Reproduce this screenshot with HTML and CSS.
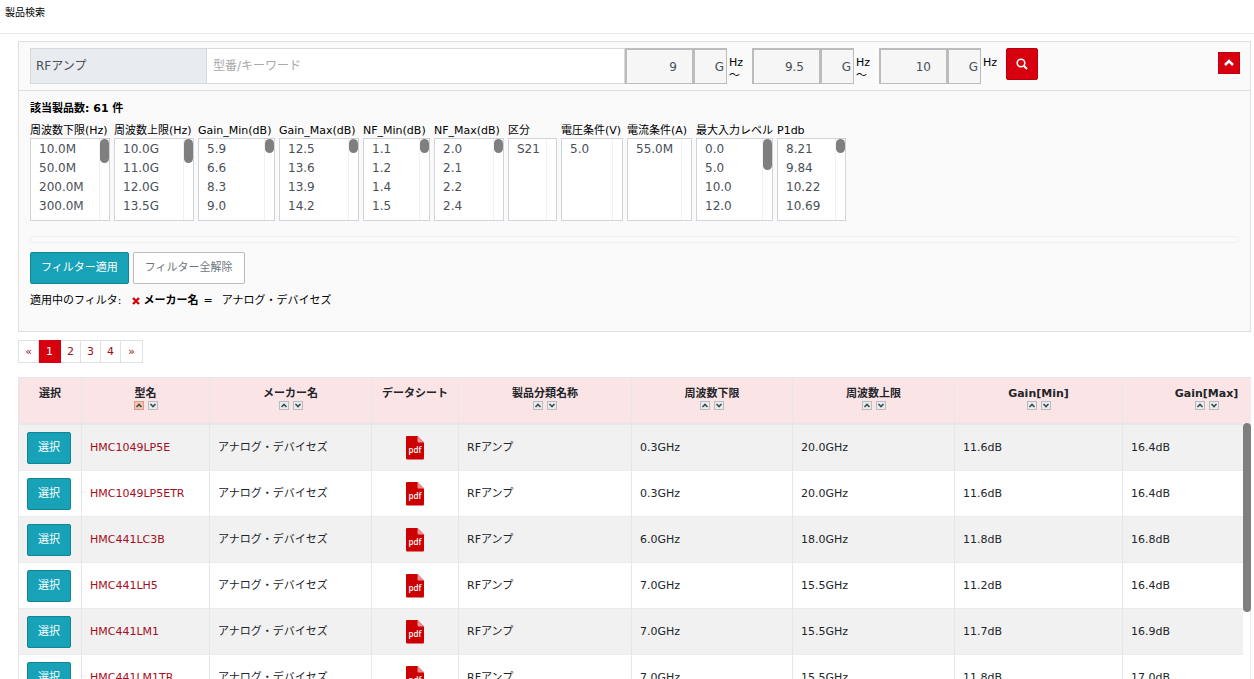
FILE: index.html
```html
<!DOCTYPE html>
<html lang="ja">
<head>
<meta charset="utf-8">
<meta name="viewport" content="width=device-width, initial-scale=1">
<title>製品検索</title>
<link rel="stylesheet" href="styles.css">
</head>
<body>
<header class="title-bar"><h1>製品検索</h1></header>
<main class="page">
  <section class="panel">
    <form class="search">
      <select class="category" aria-label="製品分類"><option>RFアンプ</option></select>
      <input class="keyword" type="text" placeholder="型番/キーワード" aria-label="型番/キーワード">
      <input class="num" type="text" value="9" aria-label="周波数下限"><input class="unit" type="text" value="G" aria-label="下限単位"><span class="hz">Hz<br>～</span>
      <input class="num" type="text" value="9.5" aria-label="周波数"><input class="unit" type="text" value="G" aria-label="単位"><span class="hz">Hz<br>～</span>
      <input class="num" type="text" value="10" aria-label="周波数上限"><input class="unit" type="text" value="G" aria-label="上限単位"><span class="hz">Hz</span>
      <button class="go" type="button" aria-label="検索"><svg width="12" height="12" viewBox="0 0 12 12"><circle cx="5" cy="5" r="3.800" fill="none" stroke="#fff" stroke-width="1.600"/><path d="M7.800 7.800 11 11" stroke="#fff" stroke-width="2"/></svg></button>
      <button class="fold" type="button" aria-label="折りたたむ"><svg width="10" height="8" viewBox="0 0 10 8"><path d="M1 6 5 2 9 6" fill="none" stroke="#fff" stroke-width="2.500"/></svg></button>
    </form>
    <div class="panel-body">
      <p class="count">該当製品数: 61 件</p>
      <div class="filters" id="filters"></div>
      <div class="track"></div>
      <div class="actions"><button class="teal" type="button">フィルター適用</button><button class="plain" type="button">フィルター全解除</button></div>
      <p class="active-filter">適用中のフィルタ: <button class="remove" type="button" aria-label="解除"><svg width="8" height="8" viewBox="0 0 8 8"><path d="M1 1 7 7M7 1 1 7" stroke="#d7000f" stroke-width="2.400"/></svg></button><b>メーカー名</b><span class="eq">=</span>アナログ・デバイセズ</p>
    </div>
  </section>
  <nav class="pages" aria-label="ページ"><a href="#">«</a><a href="#" class="current">1</a><a href="#">2</a><a href="#">3</a><a href="#">4</a><a href="#">»</a></nav>
  <div class="results">
    <table>
      <colgroup><col class="c-pick"><col class="c-model"><col class="c-maker"><col class="c-sheet"><col class="c-kind"><col class="c-low"><col class="c-high"><col class="c-gain"><col class="c-gain"></colgroup>
      <thead><tr id="head"></tr></thead>
      <tbody id="rows"></tbody>
    </table>
    <div class="scrollbar"><div class="scroll-thumb"></div></div>
  </div>
</main>
<script src="app.js"></script>
</body>
</html>
```
FILE: styles.css
```css
* { box-sizing: border-box; }
body {
  margin: 0;
  height: 100vh;
  overflow: hidden;
  display: flex;
  flex-direction: column;
  background: #fff;
  color: #212529;
  font: 11px/16px "DejaVu Sans", "Noto Sans CJK JP", sans-serif;
}
button, input, select { font: inherit; color: inherit; margin: 0; }
button { cursor: pointer; }
a { color: #a50d22; text-decoration: none; }
p { margin: 0; }
.title-bar { height: 34px; padding: 5px; border-bottom: 1px solid #e7e7e7; flex: none; }
.title-bar h1 { margin: 0; font-size: 10px; font-weight: 400; line-height: 16px; color: #000; }
.page { flex: 1; min-height: 0; display: flex; flex-direction: column; padding: 7px 3px 0 18px; }

.panel { flex: none; border: 1px solid #dfdfdf; background: #fafafa; }
.search { display: flex; align-items: flex-start; padding: 6px 10px 6px 11px; border-bottom: 1px solid #dfdfdf; }
.category, .keyword { height: 36px; border: 1px solid #d5d9dd; font-size: 12px; color: #495057; border-radius: 0; outline: 0; }
.category { appearance: none; width: 177px; padding: 0 5px; background: #e9ecef; }
.keyword { flex: 1; min-width: 0; padding: 0 6px; background: #fff; border-left: 0; }
.keyword::placeholder { color: #a9a9a9; }
.num, .unit { height: 36px; border: solid #bcbcbc; border-width: 2px 1px 1px 2px; background: #f6f6f6; font-size: 12px; color: #495057; text-align: right; border-radius: 0; }
.num { width: 68px; padding: 0 15px 0 0; }
.unit { width: 34px; padding: 0 2px 0 0; }
.hz { width: 25px; padding: 8px 0 0 2px; line-height: 13px; color: #000; }
.go { width: 32px; height: 32px; padding: 0; border: 1px solid #b8000d; border-radius: 2px; background: #d7000f; display: grid; place-items: center; }
.fold { width: 22px; height: 22px; margin: 4px 0 0 180px; padding: 0; border: 1px solid #c0000d; background: #d7000f; display: grid; place-items: center; }

.panel-body { padding: 10px 11px 22px; color: #000; }
.count { font-weight: 700; }
.filters { display: grid; grid-template-columns: 80px 80px 77px 80px 67px 70px 49px 62px 65px 77px 69px; gap: 4px; margin-top: 7px; }
.filter label { display: block; white-space: nowrap; line-height: 14px; }
.list { position: relative; }
.list select { display: block; width: 100%; height: 83px; padding: 3px 0; border: 1px solid #ced4da; border-radius: 0; background: #fff; color: #495057; font-size: 12px; overflow: hidden; outline: 0; }
.list option { padding: 0 8px; line-height: 19px; min-height: 19px; }
.list::after { content: ""; position: absolute; top: 1px; right: 1px; bottom: 1px; width: 9px; border-left: 1px solid #f1f1f1; }
.thumb { position: absolute; z-index: 1; top: 1px; right: 1px; width: 9px; height: 14px; border-radius: 5px; background: #7f7f7f; }
.thumb-mid { height: 24px; }
.thumb-long { height: 31px; }
.track { height: 7px; margin-top: 15px; border: 1px solid #f0f0f0; border-radius: 4px; }
.actions { display: flex; gap: 4px; margin: 9px 0; }
.teal, .plain { height: 32px; padding: 0 11px; border: 1px solid #138496; border-radius: 2px; background: #17a2b8; color: #fff; }
.plain { background: #fff; border-color: #bbb; color: #6c757d; }
.teal { padding: 0 10px; }
.active-filter { display: flex; align-items: center; }
.remove { padding: 0; margin: 0 4px 0 10px; border: 0; background: none; display: flex; }
.eq { margin: 0 9px 0 5px; }

.pages { flex: none; display: flex; margin: 8px 0 14px; line-height: 21px; }
.pages a { min-width: 20px; padding: 0 6px; text-align: center; border: 1px solid #dee2e6; border-left: 0; }
.pages a:first-child { border-left: 1px solid #dee2e6; width: 21px; }
.pages .current { width: 22px; background: #d7000f; color: #fff; border-color: #d7000f; }
.pages a:last-child { width: 22px; }

.results { position: relative; flex: 1; min-height: 0; overflow: hidden; }
table { width: 1273px; table-layout: fixed; border-collapse: separate; border-spacing: 0; border-left: 1px solid #e4e7ea; }
.c-pick { width: 63px; } .c-model { width: 128px; } .c-maker { width: 162px; } .c-sheet { width: 87px; } .c-kind { width: 173px; }
.c-low { width: 161px; } .c-high { width: 162px; } .c-gain { width: 168px; }
th { height: 48px; padding: 8px 0 0; vertical-align: top; background: #fbe4e6; border: solid #e9e6ea; border-width: 1px 1px 2px 0; line-height: 15px; }
td { height: 46px; padding: 0 8px; border-right: 1px solid #e4e7ea; border-bottom: 1px solid #e9ebed; }
tbody tr:nth-child(odd) { background: #f1f1f1; }
.sort { display: flex; justify-content: center; gap: 4px; }
.sort button { width: 10px; height: 9px; padding: 0; border: 1px solid #b9bdc2; background: #e9eced; color: #3d4a50; display: grid; }
.sort svg { width: 8px; height: 7px; }
.sort .on { border-color: #d99b86; background: #f6c5b2; }
.pick { display: block; width: 44px; height: 32px; padding: 0; border: 1px solid #138496; border-radius: 2px; background: #17a2b8; color: #fff; }
.sheet a { display: block; width: 18px; height: 24px; margin: 0 auto; }
.sheet svg { display: block; width: 18px; height: 24px; }
.pdf-text { font: 600 8px "Open Sans", sans-serif; fill: #fff; }
.scrollbar { position: absolute; top: 46px; right: 0; bottom: 0; width: 8px; background: #fff; border-right: 1px solid #eee; }
.scroll-thumb { width: 8px; height: 189px; border-radius: 4px; background: #7f7f7f; }
```
FILE: app.js
```javascript
const filters = [
  ["周波数下限(Hz)", ["10.0M", "50.0M", "200.0M", "300.0M"], "mid"],
  ["周波数上限(Hz)", ["10.0G", "11.0G", "12.0G", "13.5G"], "mid"],
  ["Gain_Min(dB)", ["5.9", "6.6", "8.3", "9.0"], "short"],
  ["Gain_Max(dB)", ["12.5", "13.6", "13.9", "14.2"], "short"],
  ["NF_Min(dB)", ["1.1", "1.2", "1.4", "1.5"], "short"],
  ["NF_Max(dB)", ["2.0", "2.1", "2.2", "2.4"], "short"],
  ["区分", ["S21"]],
  ["電圧条件(V)", ["5.0"]],
  ["電流条件(A)", ["55.0M"]],
  ["最大入力レベル", ["0.0", "5.0", "10.0", "12.0"], "long"],
  ["P1db", ["8.21", "9.84", "10.22", "10.69"], "short"]
];
document.getElementById("filters").innerHTML = filters.map(([name, values, thumb], i) =>
  `<div class="filter"><label for="f${i}">${name}</label><div class="list"><select id="f${i}" multiple size="4">${values.map(v => `<option>${v}</option>`).join("")}</select>${thumb ? `<span class="thumb thumb-${thumb}"></span>` : ""}</div></div>`
).join("");

const chevron = d => `<svg viewBox="0 0 8 7"><path d="${d}" fill="none" stroke="currentColor" stroke-width="1.600"/></svg>`;
const sort = active => `<div class="sort"><button type="button" class="${active ? "on" : ""}" aria-label="昇順">${chevron("M1.500 5 4 2.500 6.500 5")}</button><button type="button" aria-label="降順">${chevron("M1.500 2 4 4.500 6.500 2")}</button></div>`;
const heads = ["選択", "型名", "メーカー名", "データシート", "製品分類名称", "周波数下限", "周波数上限", "Gain[Min]", "Gain[Max]"];
document.getElementById("head").innerHTML = heads.map((h, i) =>
  `<th scope="col">${h}${i === 0 || i === 3 ? "" : sort(i === 1)}</th>`
).join("");

const pdf = `<svg viewBox="0 0 18 24"><path d="M0 1Q0 0 1 0H11.500L18 6.500V22Q18 23.500 17 23.500H1Q0 23.500 0 22Z" fill="#c00"/><path d="M11.500 0 18 6.500H12.500Q11.500 6.500 11.500 5.500Z" fill="#ec8f92"/><text x="9" y="17" text-anchor="middle" class="pdf-text">pdf</text></svg>`;
const rows = [
  ["HMC1049LP5E", "0.3GHz", "20.0GHz", "11.6dB", "16.4dB"],
  ["HMC1049LP5ETR", "0.3GHz", "20.0GHz", "11.6dB", "16.4dB"],
  ["HMC441LC3B", "6.0GHz", "18.0GHz", "11.8dB", "16.8dB"],
  ["HMC441LH5", "7.0GHz", "15.5GHz", "11.2dB", "16.4dB"],
  ["HMC441LM1", "7.0GHz", "15.5GHz", "11.7dB", "16.9dB"],
  ["HMC441LM1TR", "7.0GHz", "15.5GHz", "11.8dB", "17.0dB"]
];
document.getElementById("rows").innerHTML = rows.map(([model, ...specs]) =>
  `<tr><td><button class="pick" type="button">選択</button></td><td><a href="#">${model}</a></td><td>アナログ・デバイセズ</td><td class="sheet"><a href="#" aria-label="データシート">${pdf}</a></td><td>RFアンプ</td>${specs.map(s => `<td>${s}</td>`).join("")}</tr>`
).join("");
```
